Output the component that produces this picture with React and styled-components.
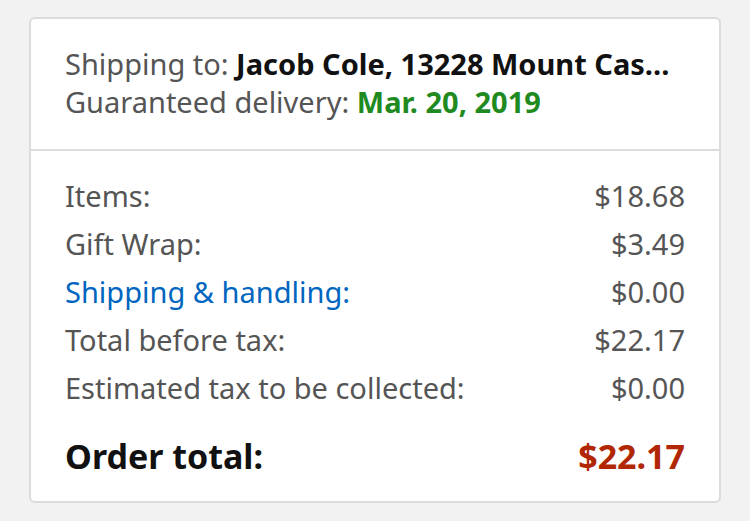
import styled, { createGlobalStyle } from 'styled-components';

const Global = createGlobalStyle`
  html, body { margin: 0; background: #f2f2f2; }
  body { font-family: "Noto Sans", "Open Sans", sans-serif; }
`;

const Page = styled.div`
  padding: 17px 29px 0 29px;
  width: 750px;
  box-sizing: border-box;
`;

const Card = styled.div`
  background: #fff;
  border: 2px solid #dcdcdc;
  border-radius: 6px;
  overflow: hidden;
`;

const Header = styled.div`
  padding: 26px 34px 28px;
  border-bottom: 2px solid #dcdcdc;
  font-size: 29px;
  line-height: 38px;
  color: #555;
`;

const Line = styled.div`
  white-space: nowrap;
  overflow: hidden;
  text-overflow: ellipsis;
`;

const Strong = styled.span`
  font-weight: 700;
  color: ${p => p.$color || '#111'};
`;

const Summary = styled.div`
  padding: 21px 34px 21px;
  display: flex;
  flex-direction: column;
`;

const Row = styled.div`
  display: flex;
  justify-content: space-between;
  font-size: 29px;
  line-height: 48px;
  color: #555;
`;

const Label = styled.span`
  color: ${p => (p.$link ? '#0066c0' : 'inherit')};
`;

const TotalRow = styled(Row)`
  margin-top: 20px;
  font-size: 34px;
  font-weight: 700;
  color: #111;
`;

const Price = styled.span`
  color: ${p => p.$color || 'inherit'};
`;

const rows = [
  { label: 'Items:', value: '$18.68' },
  { label: 'Gift Wrap:', value: '$3.49' },
  { label: 'Shipping & handling:', value: '$0.00', link: true },
  { label: 'Total before tax:', value: '$22.17' },
  { label: 'Estimated tax to be collected:', value: '$0.00' },
];

export default function App() {
  return (
    <>
      <Global />
      <Page>
        <Card>
          <Header>
            <Line>
              Shipping to: <Strong>Jacob Cole, 13228 Mount Cas…</Strong>
            </Line>
            <Line>
              Guaranteed delivery: <Strong $color="#1f8a1f">Mar. 20, 2019</Strong>
            </Line>
          </Header>
          <Summary>
            {rows.map(r => (
              <Row key={r.label}>
                <Label $link={r.link}>{r.label}</Label>
                <Price>{r.value}</Price>
              </Row>
            ))}
            <TotalRow>
              <span>Order total:</span>
              <Price $color="#b12704">$22.17</Price>
            </TotalRow>
          </Summary>
        </Card>
      </Page>
    </>
  );
}
